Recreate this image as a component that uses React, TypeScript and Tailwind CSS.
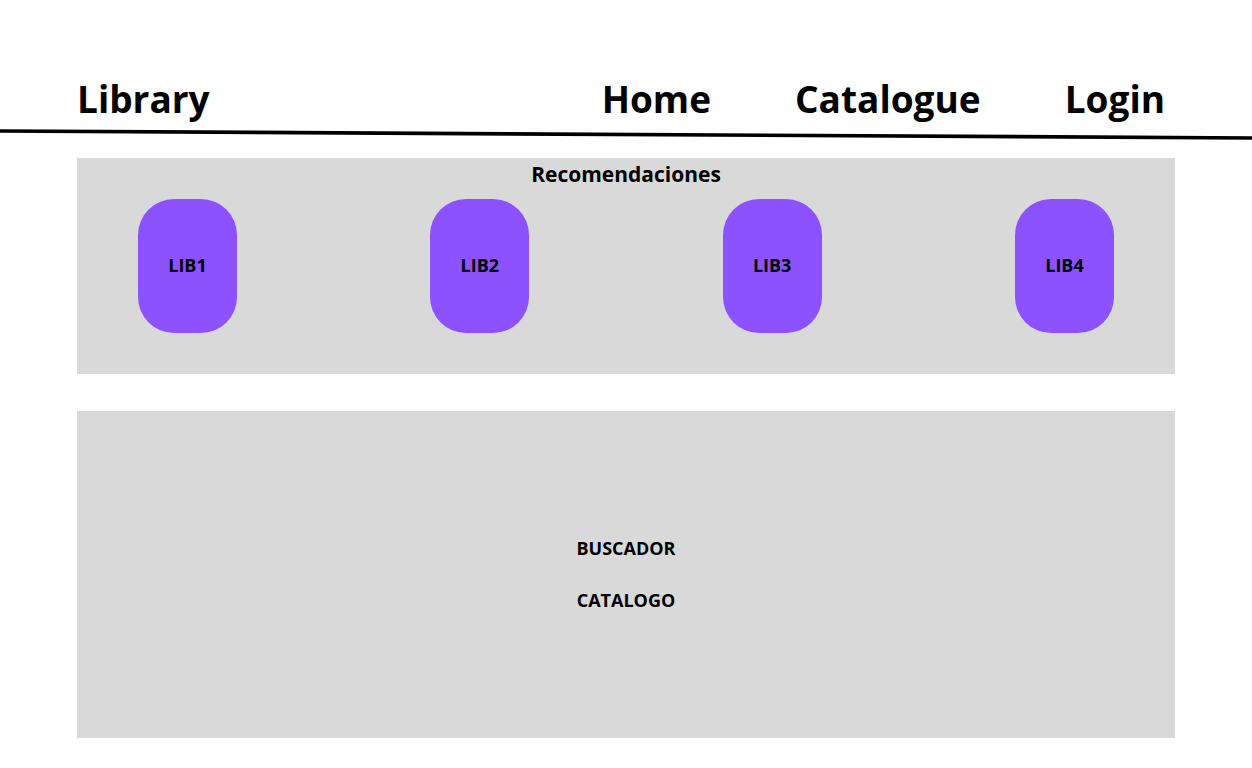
const books = ["LIB1", "LIB2", "LIB3", "LIB4"];

const links = ["Home", "Catalogue", "Login"];

export default function App() {
  return (
    <div className="min-h-screen bg-white pb-[30px] font-['Open_Sans',sans-serif] font-bold text-black">
      <header>
        <div className="flex items-center justify-between pt-[71px] pr-[87px] pb-px pl-[77px] text-[37px] leading-[56px]">
          <a href="#">Library</a>
          <nav className="flex gap-[84px]">
            {links.map((link) => (
              <a key={link} href={`#${link.toLowerCase()}`}>
                {link}
              </a>
            ))}
          </nav>
        </div>
        <svg className="block h-3 w-full" viewBox="0 0 1252 12" preserveAspectRatio="none" aria-hidden="true">
          <line x1="-4" y1="3" x2="1256" y2="10" stroke="#000" strokeWidth="3.7" />
        </svg>
      </header>
      <main className="mt-[18px] px-[77px]">
        <section className="bg-[#d9d9d9] px-[61px] pb-[41px]">
          <h1 className="mb-[9px] text-center text-[21px] leading-8">Recomendaciones</h1>
          <div className="flex justify-between">
            {books.map((book) => (
              <article
                key={book}
                className="flex h-[134px] w-[99px] items-center justify-center rounded-[36px] bg-[#8c52ff] pb-[2px] text-lg"
              >
                {book}
              </article>
            ))}
          </div>
        </section>
        <section className="mt-[37px] flex h-[327px] flex-col items-center justify-center gap-[26px] bg-[#d9d9d9] pb-[2px] text-lg leading-[26px]">
          <h2>BUSCADOR</h2>
          <h2>CATALOGO</h2>
        </section>
      </main>
    </div>
  );
}
